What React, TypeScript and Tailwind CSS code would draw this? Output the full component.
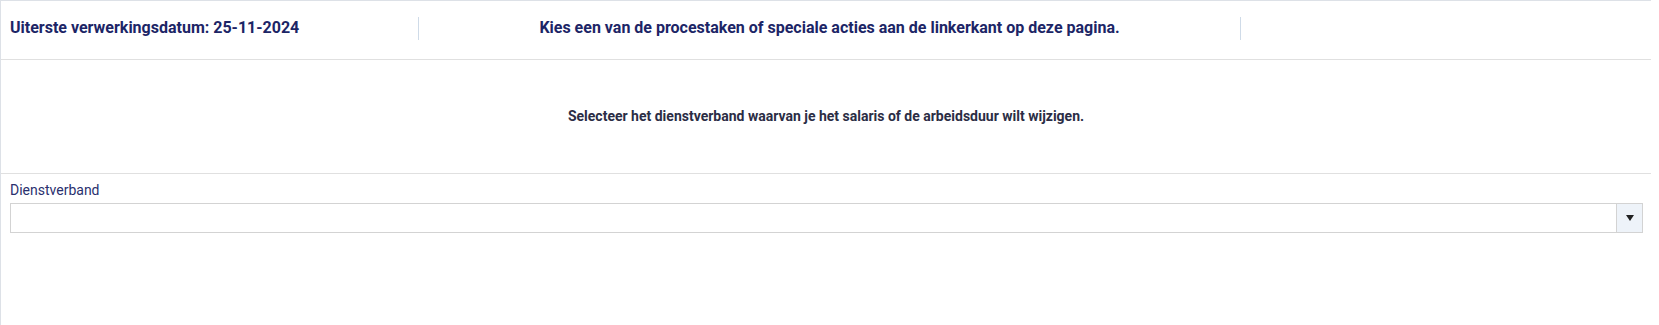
import React from "react";

export default function App() {
  return (
    <div
      className="min-h-[325px] w-[1651px] border-l border-t border-[#dde1e7] bg-white"
      style={{ fontFamily: "Roboto, 'Liberation Sans', sans-serif" }}
    >
      <div className="flex h-[59px] items-center border-b border-[#e0e0e0] pb-[4px]">
        <div className="flex h-[23px] w-[417px] items-center pl-[9px] text-[16px] font-bold text-[#1c2566]">
          Uiterste verwerkingsdatum: 25-11-2024
        </div>
        <div className="flex h-[23px] w-[822px] items-center justify-center border-l border-[#cfdbe8] text-[16px] font-bold text-[#1c2566]">
          Kies een van de procestaken of speciale acties aan de linkerkant op deze pagina.
        </div>
        <div className="h-[23px] flex-1 border-l border-[#cfdbe8]" />
      </div>
      <div className="flex h-[114px] items-center justify-center border-b border-[#e0e0e0] text-[14px] font-bold text-[#2b2d45]">
        Selecteer het dienstverband waarvan je het salaris of de arbeidsduur wilt wijzigen.
      </div>
      <div className="pl-[9px] pr-[8px] pt-[6px]">
        <div className="text-[14px] leading-[20px] text-[#2a306e]">Dienstverband</div>
        <div className="mt-[3px] flex h-[30px] border border-[#d3d3d3] bg-white">
          <div className="flex-1" />
          <div className="flex w-[26px] items-center justify-center border-l border-[#d3d3d3] bg-[#eef3f9]">
            <svg width="8" height="6" viewBox="0 0 8 6">
              <path d="M0 0 H8 L4 6 Z" fill="#222" />
            </svg>
          </div>
        </div>
      </div>
    </div>
  );
}
